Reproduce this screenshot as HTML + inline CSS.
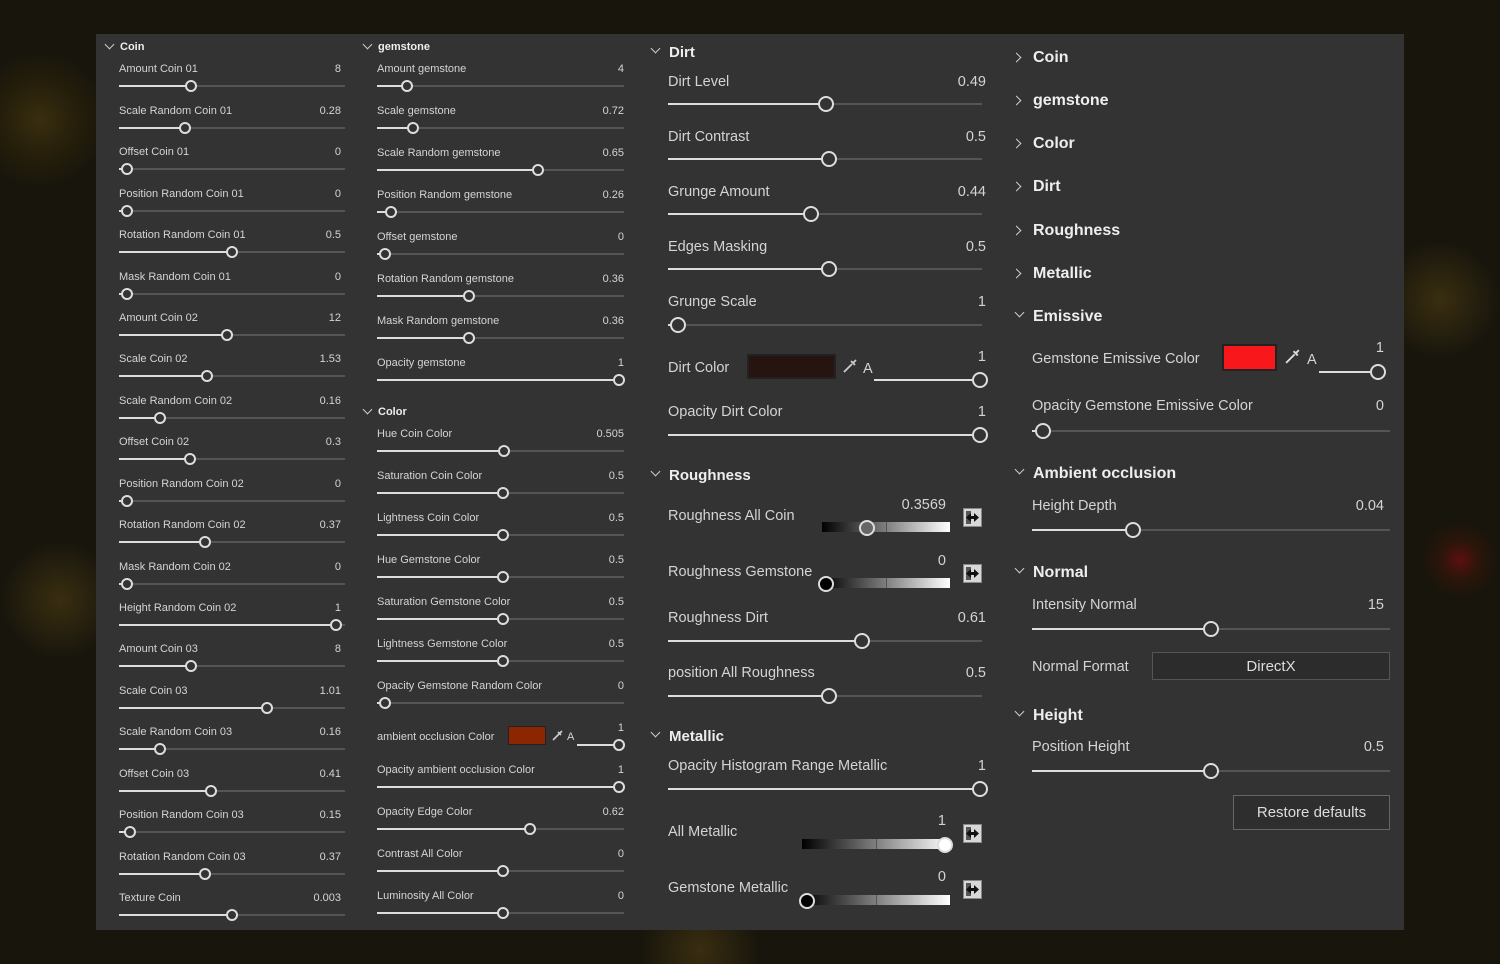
<!DOCTYPE html>
<html><head><meta charset="utf-8"><style>
*{margin:0;padding:0;box-sizing:border-box}
body{width:1500px;height:964px;overflow:hidden;position:relative;font-family:"Liberation Sans",sans-serif;color:#d8d8d8;
background:radial-gradient(circle at 40px 120px,#3a2e10 0,#241d0a 40px,transparent 70px),radial-gradient(circle at 1460px 560px,#5a1010 0,#2a150a 20px,transparent 40px),radial-gradient(circle at 1440px 300px,#3a2e10 0,transparent 60px),radial-gradient(circle at 60px 600px,#3a2e10 0,transparent 60px),radial-gradient(circle at 700px 950px,#3a2e10 0,transparent 60px),#17150c}
#p{position:absolute;left:96px;top:34px;width:1308px;height:896px;background:#333}
.s{position:absolute;font-size:11px;line-height:14px;white-space:nowrap;color:#d4d4d4;margin-top:1px}
.m{position:absolute;font-size:14.5px;line-height:20px;white-space:nowrap;color:#d4d4d4;margin-top:1px}
.h{position:absolute;font-size:11px;font-weight:bold;line-height:14px;color:#eee;margin-top:1px}
.H{position:absolute;font-size:16px;font-weight:bold;line-height:20px;color:#eee;margin-top:1px}
.v{position:absolute;text-align:right}
.t{position:absolute;height:2px;background:#555;margin-top:-1px}
.t i{position:absolute;left:0;top:0;height:2px;background:#ddd}
.t b{position:absolute;top:-5px;width:12px;height:12px;margin-left:-6px;border:2px solid #ddd;border-radius:50%;background:#333}
.T b{top:-7px;width:16px;height:16px;margin-left:-8px}
.cd,.cr{position:absolute;width:7px;height:7px;border-right:1.5px solid #ccc;border-bottom:1.5px solid #ccc}
.cd{transform:rotate(45deg)}.cr{transform:rotate(-45deg)}
.g{position:absolute;height:10px;background:linear-gradient(90deg,#000,#fff)}
.g::after{content:"";position:absolute;left:50%;top:0;width:1px;height:10px;background:#555}
.k{position:absolute;width:16px;height:16px;border:2px solid #ddd;border-radius:50%;margin:-8px 0 0 -8px}
.ic{position:absolute;width:19px;height:19px}
</style></head><body>
<svg width="0" height="0" style="position:absolute"><defs><symbol id="ic" viewBox="0 0 19 19"><rect x="0.5" y="0.5" width="18" height="18" fill="#d8d8d8" stroke="#888"/><rect x="3" y="3" width="5" height="13" fill="#555"/><path d="M3 9.5 L8 5 V8 H11 V5 L16 9.5 L11 14 V11 H8 V14 Z" fill="#111"/></symbol></defs></svg>
<div id="p"></div>
<!-- col1 -->
<div class="cd" style="left:106px;top:41px"></div><div class="h" style="left:120px;top:39px">Coin</div>
<div class="s" style="left:119px;top:61px">Amount Coin 01</div><div class="s v" style="right:1159px;top:61px">8</div><div class="t" style="left:119px;top:86px;width:226px"><i style="width:72px"></i><b style="left:72px"></b></div>
<div class="s" style="left:119px;top:103px">Scale Random Coin 01</div><div class="s v" style="right:1159px;top:103px">0.28</div><div class="t" style="left:119px;top:128px;width:226px"><i style="width:66px"></i><b style="left:66px"></b></div>
<div class="s" style="left:119px;top:144px">Offset Coin 01</div><div class="s v" style="right:1159px;top:144px">0</div><div class="t" style="left:119px;top:169px;width:226px"><i style="width:8px"></i><b style="left:8px"></b></div>
<div class="s" style="left:119px;top:186px">Position Random Coin 01</div><div class="s v" style="right:1159px;top:186px">0</div><div class="t" style="left:119px;top:211px;width:226px"><i style="width:8px"></i><b style="left:8px"></b></div>
<div class="s" style="left:119px;top:227px">Rotation Random Coin 01</div><div class="s v" style="right:1159px;top:227px">0.5</div><div class="t" style="left:119px;top:252px;width:226px"><i style="width:113px"></i><b style="left:113px"></b></div>
<div class="s" style="left:119px;top:269px">Mask Random Coin 01</div><div class="s v" style="right:1159px;top:269px">0</div><div class="t" style="left:119px;top:294px;width:226px"><i style="width:8px"></i><b style="left:8px"></b></div>
<div class="s" style="left:119px;top:310px">Amount Coin 02</div><div class="s v" style="right:1159px;top:310px">12</div><div class="t" style="left:119px;top:335px;width:226px"><i style="width:108px"></i><b style="left:108px"></b></div>
<div class="s" style="left:119px;top:351px">Scale Coin 02</div><div class="s v" style="right:1159px;top:351px">1.53</div><div class="t" style="left:119px;top:376px;width:226px"><i style="width:88px"></i><b style="left:88px"></b></div>
<div class="s" style="left:119px;top:393px">Scale Random Coin 02</div><div class="s v" style="right:1159px;top:393px">0.16</div><div class="t" style="left:119px;top:418px;width:226px"><i style="width:41px"></i><b style="left:41px"></b></div>
<div class="s" style="left:119px;top:434px">Offset Coin 02</div><div class="s v" style="right:1159px;top:434px">0.3</div><div class="t" style="left:119px;top:459px;width:226px"><i style="width:71px"></i><b style="left:71px"></b></div>
<div class="s" style="left:119px;top:476px">Position Random Coin 02</div><div class="s v" style="right:1159px;top:476px">0</div><div class="t" style="left:119px;top:501px;width:226px"><i style="width:8px"></i><b style="left:8px"></b></div>
<div class="s" style="left:119px;top:517px">Rotation Random Coin 02</div><div class="s v" style="right:1159px;top:517px">0.37</div><div class="t" style="left:119px;top:542px;width:226px"><i style="width:86px"></i><b style="left:86px"></b></div>
<div class="s" style="left:119px;top:559px">Mask Random Coin 02</div><div class="s v" style="right:1159px;top:559px">0</div><div class="t" style="left:119px;top:584px;width:226px"><i style="width:8px"></i><b style="left:8px"></b></div>
<div class="s" style="left:119px;top:600px">Height Random Coin 02</div><div class="s v" style="right:1159px;top:600px">1</div><div class="t" style="left:119px;top:625px;width:226px"><i style="width:217px"></i><b style="left:217px"></b></div>
<div class="s" style="left:119px;top:641px">Amount Coin 03</div><div class="s v" style="right:1159px;top:641px">8</div><div class="t" style="left:119px;top:666px;width:226px"><i style="width:72px"></i><b style="left:72px"></b></div>
<div class="s" style="left:119px;top:683px">Scale Coin 03</div><div class="s v" style="right:1159px;top:683px">1.01</div><div class="t" style="left:119px;top:708px;width:226px"><i style="width:148px"></i><b style="left:148px"></b></div>
<div class="s" style="left:119px;top:724px">Scale Random Coin 03</div><div class="s v" style="right:1159px;top:724px">0.16</div><div class="t" style="left:119px;top:749px;width:226px"><i style="width:41px"></i><b style="left:41px"></b></div>
<div class="s" style="left:119px;top:766px">Offset Coin 03</div><div class="s v" style="right:1159px;top:766px">0.41</div><div class="t" style="left:119px;top:791px;width:226px"><i style="width:92px"></i><b style="left:92px"></b></div>
<div class="s" style="left:119px;top:807px">Position Random Coin 03</div><div class="s v" style="right:1159px;top:807px">0.15</div><div class="t" style="left:119px;top:832px;width:226px"><i style="width:11px"></i><b style="left:11px"></b></div>
<div class="s" style="left:119px;top:849px">Rotation Random Coin 03</div><div class="s v" style="right:1159px;top:849px">0.37</div><div class="t" style="left:119px;top:874px;width:226px"><i style="width:86px"></i><b style="left:86px"></b></div>
<div class="s" style="left:119px;top:890px">Texture Coin</div><div class="s v" style="right:1159px;top:890px">0.003</div><div class="t" style="left:119px;top:915px;width:226px"><i style="width:113px"></i><b style="left:113px"></b></div>
<!-- col2 -->
<div class="cd" style="left:364px;top:41px"></div><div class="h" style="left:378px;top:39px">gemstone</div>
<div class="s" style="left:377px;top:61px">Amount gemstone</div><div class="s v" style="right:876px;top:61px">4</div><div class="t" style="left:377px;top:86px;width:247px"><i style="width:30px"></i><b style="left:30px"></b></div>
<div class="s" style="left:377px;top:103px">Scale gemstone</div><div class="s v" style="right:876px;top:103px">0.72</div><div class="t" style="left:377px;top:128px;width:247px"><i style="width:36px"></i><b style="left:36px"></b></div>
<div class="s" style="left:377px;top:145px">Scale Random gemstone</div><div class="s v" style="right:876px;top:145px">0.65</div><div class="t" style="left:377px;top:170px;width:247px"><i style="width:161px"></i><b style="left:161px"></b></div>
<div class="s" style="left:377px;top:187px">Position Random gemstone</div><div class="s v" style="right:876px;top:187px">0.26</div><div class="t" style="left:377px;top:212px;width:247px"><i style="width:14px"></i><b style="left:14px"></b></div>
<div class="s" style="left:377px;top:229px">Offset gemstone</div><div class="s v" style="right:876px;top:229px">0</div><div class="t" style="left:377px;top:254px;width:247px"><i style="width:8px"></i><b style="left:8px"></b></div>
<div class="s" style="left:377px;top:271px">Rotation Random gemstone</div><div class="s v" style="right:876px;top:271px">0.36</div><div class="t" style="left:377px;top:296px;width:247px"><i style="width:92px"></i><b style="left:92px"></b></div>
<div class="s" style="left:377px;top:313px">Mask Random gemstone</div><div class="s v" style="right:876px;top:313px">0.36</div><div class="t" style="left:377px;top:338px;width:247px"><i style="width:92px"></i><b style="left:92px"></b></div>
<div class="s" style="left:377px;top:355px">Opacity gemstone</div><div class="s v" style="right:876px;top:355px">1</div><div class="t" style="left:377px;top:380px;width:247px"><i style="width:242px"></i><b style="left:242px"></b></div>
<div class="cd" style="left:364px;top:406px"></div><div class="h" style="left:378px;top:404px">Color</div>
<div class="s" style="left:377px;top:426px">Hue Coin Color</div><div class="s v" style="right:876px;top:426px">0.505</div><div class="t" style="left:377px;top:451px;width:247px"><i style="width:127px"></i><b style="left:127px"></b></div>
<div class="s" style="left:377px;top:468px">Saturation Coin Color</div><div class="s v" style="right:876px;top:468px">0.5</div><div class="t" style="left:377px;top:493px;width:247px"><i style="width:126px"></i><b style="left:126px"></b></div>
<div class="s" style="left:377px;top:510px">Lightness Coin Color</div><div class="s v" style="right:876px;top:510px">0.5</div><div class="t" style="left:377px;top:535px;width:247px"><i style="width:126px"></i><b style="left:126px"></b></div>
<div class="s" style="left:377px;top:552px">Hue Gemstone Color</div><div class="s v" style="right:876px;top:552px">0.5</div><div class="t" style="left:377px;top:577px;width:247px"><i style="width:126px"></i><b style="left:126px"></b></div>
<div class="s" style="left:377px;top:594px">Saturation Gemstone Color</div><div class="s v" style="right:876px;top:594px">0.5</div><div class="t" style="left:377px;top:619px;width:247px"><i style="width:126px"></i><b style="left:126px"></b></div>
<div class="s" style="left:377px;top:636px">Lightness Gemstone Color</div><div class="s v" style="right:876px;top:636px">0.5</div><div class="t" style="left:377px;top:661px;width:247px"><i style="width:126px"></i><b style="left:126px"></b></div>
<div class="s" style="left:377px;top:678px">Opacity Gemstone Random Color</div><div class="s v" style="right:876px;top:678px">0</div><div class="t" style="left:377px;top:703px;width:247px"><i style="width:8px"></i><b style="left:8px"></b></div>
<div class="s" style="left:377px;top:729px">ambient occlusion Color</div>
<div style="position:absolute;left:508px;top:726px;width:38px;height:19px;border:1px solid #222;background:#8c2600"></div>
<svg style="position:absolute;left:551px;top:729px" width="13" height="13" viewBox="0 0 13 13"><path d="M2 11 L8 5 M7 3 L10 6 M9 4 L11 2" stroke="#ccc" stroke-width="1.6" fill="none"/></svg>
<div class="s" style="left:567px;top:729px">A</div><div class="s v" style="right:876px;top:720px">1</div>
<div class="t" style="left:577px;top:745px;width:43px"><i style="width:42px"></i><b style="left:42px"></b></div>
<div class="s" style="left:377px;top:762px">Opacity ambient occlusion Color</div><div class="s v" style="right:876px;top:762px">1</div><div class="t" style="left:377px;top:787px;width:247px"><i style="width:242px"></i><b style="left:242px"></b></div>
<div class="s" style="left:377px;top:804px">Opacity Edge Color</div><div class="s v" style="right:876px;top:804px">0.62</div><div class="t" style="left:377px;top:829px;width:247px"><i style="width:153px"></i><b style="left:153px"></b></div>
<div class="s" style="left:377px;top:846px">Contrast All Color</div><div class="s v" style="right:876px;top:846px">0</div><div class="t" style="left:377px;top:871px;width:247px"><i style="width:126px"></i><b style="left:126px"></b></div>
<div class="s" style="left:377px;top:888px">Luminosity All Color</div><div class="s v" style="right:876px;top:888px">0</div><div class="t" style="left:377px;top:913px;width:247px"><i style="width:126px"></i><b style="left:126px"></b></div>
<!-- col3 -->
<div class="cd" style="left:652px;top:45px"></div><div class="H" style="left:669px;top:42px;font-size:15px">Dirt</div>
<div class="m" style="left:668px;top:71px">Dirt Level</div><div class="m v" style="right:514px;top:71px">0.49</div><div class="t T" style="left:668px;top:104px;width:314px"><i style="width:158px"></i><b style="left:158px"></b></div>
<div class="m" style="left:668px;top:126px">Dirt Contrast</div><div class="m v" style="right:514px;top:126px">0.5</div><div class="t T" style="left:668px;top:159px;width:314px"><i style="width:161px"></i><b style="left:161px"></b></div>
<div class="m" style="left:668px;top:181px">Grunge Amount</div><div class="m v" style="right:514px;top:181px">0.44</div><div class="t T" style="left:668px;top:214px;width:314px"><i style="width:143px"></i><b style="left:143px"></b></div>
<div class="m" style="left:668px;top:236px">Edges Masking</div><div class="m v" style="right:514px;top:236px">0.5</div><div class="t T" style="left:668px;top:269px;width:314px"><i style="width:161px"></i><b style="left:161px"></b></div>
<div class="m" style="left:668px;top:291px">Grunge Scale</div><div class="m v" style="right:514px;top:291px">1</div><div class="t T" style="left:668px;top:325px;width:314px"><i style="width:10px"></i><b style="left:10px"></b></div>
<div class="m" style="left:668px;top:357px">Dirt Color</div>
<div style="position:absolute;left:747px;top:354px;width:89px;height:25px;border:2px solid #222;background:#261410"></div>
<svg style="position:absolute;left:842px;top:358px" width="16" height="16" viewBox="0 0 16 16"><path d="M2 14 L10 6 M9 3 L13 7 M11 5 L14 2" stroke="#ccc" stroke-width="1.8" fill="none"/></svg>
<div class="m" style="left:863px;top:358px">A</div><div class="m v" style="right:514px;top:346px">1</div>
<div class="t T" style="left:874px;top:380px;width:107px"><i style="width:106px"></i><b style="left:106px"></b></div>
<div class="m" style="left:668px;top:401px">Opacity Dirt Color</div><div class="m v" style="right:514px;top:401px">1</div><div class="t T" style="left:668px;top:435px;width:314px"><i style="width:312px"></i><b style="left:312px"></b></div>
<div class="cd" style="left:652px;top:468px"></div><div class="H" style="left:669px;top:465px;font-size:15px">Roughness</div>
<div class="m" style="left:668px;top:505px">Roughness All Coin</div><div class="m v" style="right:554px;top:494px">0.3569</div>
<div class="g" style="left:822px;top:522px;width:128px"></div><div class="k" style="left:867px;top:528px;background:#666"></div><svg class="ic" style="left:963px;top:508px"><use href="#ic"/></svg>
<div class="m" style="left:668px;top:561px">Roughness Gemstone</div><div class="m v" style="right:554px;top:550px">0</div>
<div class="g" style="left:822px;top:578px;width:128px"></div><div class="k" style="left:826px;top:584px;background:#000"></div><svg class="ic" style="left:963px;top:564px"><use href="#ic"/></svg>
<div class="m" style="left:668px;top:607px">Roughness Dirt</div><div class="m v" style="right:514px;top:607px">0.61</div><div class="t T" style="left:668px;top:641px;width:314px"><i style="width:194px"></i><b style="left:194px"></b></div>
<div class="m" style="left:668px;top:662px">position All Roughness</div><div class="m v" style="right:514px;top:662px">0.5</div><div class="t T" style="left:668px;top:696px;width:314px"><i style="width:161px"></i><b style="left:161px"></b></div>
<div class="cd" style="left:652px;top:729px"></div><div class="H" style="left:669px;top:726px;font-size:15px">Metallic</div>
<div class="m" style="left:668px;top:755px">Opacity Histogram Range Metallic</div><div class="m v" style="right:514px;top:755px">1</div><div class="t T" style="left:668px;top:789px;width:314px"><i style="width:312px"></i><b style="left:312px"></b></div>
<div class="m" style="left:668px;top:821px">All Metallic</div><div class="m v" style="right:554px;top:810px">1</div>
<div class="g" style="left:802px;top:839px;width:148px"></div><div class="k" style="left:945px;top:845px;background:#fff"></div><svg class="ic" style="left:963px;top:824px"><use href="#ic"/></svg>
<div class="m" style="left:668px;top:877px">Gemstone Metallic</div><div class="m v" style="right:554px;top:866px">0</div>
<div class="g" style="left:802px;top:895px;width:148px"></div><div class="k" style="left:807px;top:901px;background:#000"></div><svg class="ic" style="left:963px;top:880px"><use href="#ic"/></svg>
<!-- col4 -->
<div class="cr" style="left:1013px;top:54px"></div><div class="H" style="left:1033px;top:47px">Coin</div>
<div class="cr" style="left:1013px;top:97px"></div><div class="H" style="left:1033px;top:90px">gemstone</div>
<div class="cr" style="left:1013px;top:140px"></div><div class="H" style="left:1033px;top:133px">Color</div>
<div class="cr" style="left:1013px;top:183px"></div><div class="H" style="left:1033px;top:176px">Dirt</div>
<div class="cr" style="left:1013px;top:227px"></div><div class="H" style="left:1033px;top:220px">Roughness</div>
<div class="cr" style="left:1013px;top:270px"></div><div class="H" style="left:1033px;top:263px">Metallic</div>
<div class="cd" style="left:1016px;top:309px"></div><div class="H" style="left:1033px;top:306px">Emissive</div>
<div class="m" style="left:1032px;top:348px">Gemstone Emissive Color</div>
<div style="position:absolute;left:1222px;top:344px;width:55px;height:27px;border:2px solid #222;background:#f8171b"></div>
<svg style="position:absolute;left:1284px;top:348px" width="17" height="17" viewBox="0 0 16 16"><path d="M2 14 L10 6 M9 3 L13 7 M11 5 L14 2" stroke="#ddd" stroke-width="1.8" fill="none"/></svg>
<div class="m" style="left:1307px;top:349px">A</div><div class="m v" style="right:116px;top:337px">1</div>
<div class="t T" style="left:1319px;top:372px;width:60px"><i style="width:59px"></i><b style="left:59px"></b></div>
<div class="m" style="left:1032px;top:395px">Opacity Gemstone Emissive Color</div><div class="m v" style="right:116px;top:395px">0</div><div class="t T" style="left:1032px;top:431px;width:358px"><i style="width:11px"></i><b style="left:11px"></b></div>
<div class="cd" style="left:1016px;top:466px"></div><div class="H" style="left:1033px;top:463px">Ambient occlusion</div>
<div class="m" style="left:1032px;top:495px">Height Depth</div><div class="m v" style="right:116px;top:495px">0.04</div><div class="t T" style="left:1032px;top:530px;width:358px"><i style="width:101px"></i><b style="left:101px"></b></div>
<div class="cd" style="left:1016px;top:565px"></div><div class="H" style="left:1033px;top:562px">Normal</div>
<div class="m" style="left:1032px;top:594px">Intensity Normal</div><div class="m v" style="right:116px;top:594px">15</div><div class="t T" style="left:1032px;top:629px;width:358px"><i style="width:179px"></i><b style="left:179px"></b></div>
<div class="m" style="left:1032px;top:656px">Normal Format</div>
<div style="position:absolute;left:1152px;top:652px;width:238px;height:28px;border:1px solid #555;background:#2c2c2c;font-size:15px;line-height:27px;text-align:center;color:#ddd">DirectX</div>
<div class="cd" style="left:1016px;top:708px"></div><div class="H" style="left:1033px;top:705px">Height</div>
<div class="m" style="left:1032px;top:736px">Position Height</div><div class="m v" style="right:116px;top:736px">0.5</div><div class="t T" style="left:1032px;top:771px;width:358px"><i style="width:179px"></i><b style="left:179px"></b></div>
<div style="position:absolute;left:1233px;top:795px;width:157px;height:35px;border:1px solid #666;background:#2e2e2e;font-size:15px;line-height:34px;text-align:center;color:#ddd">Restore defaults</div>
</body></html>
